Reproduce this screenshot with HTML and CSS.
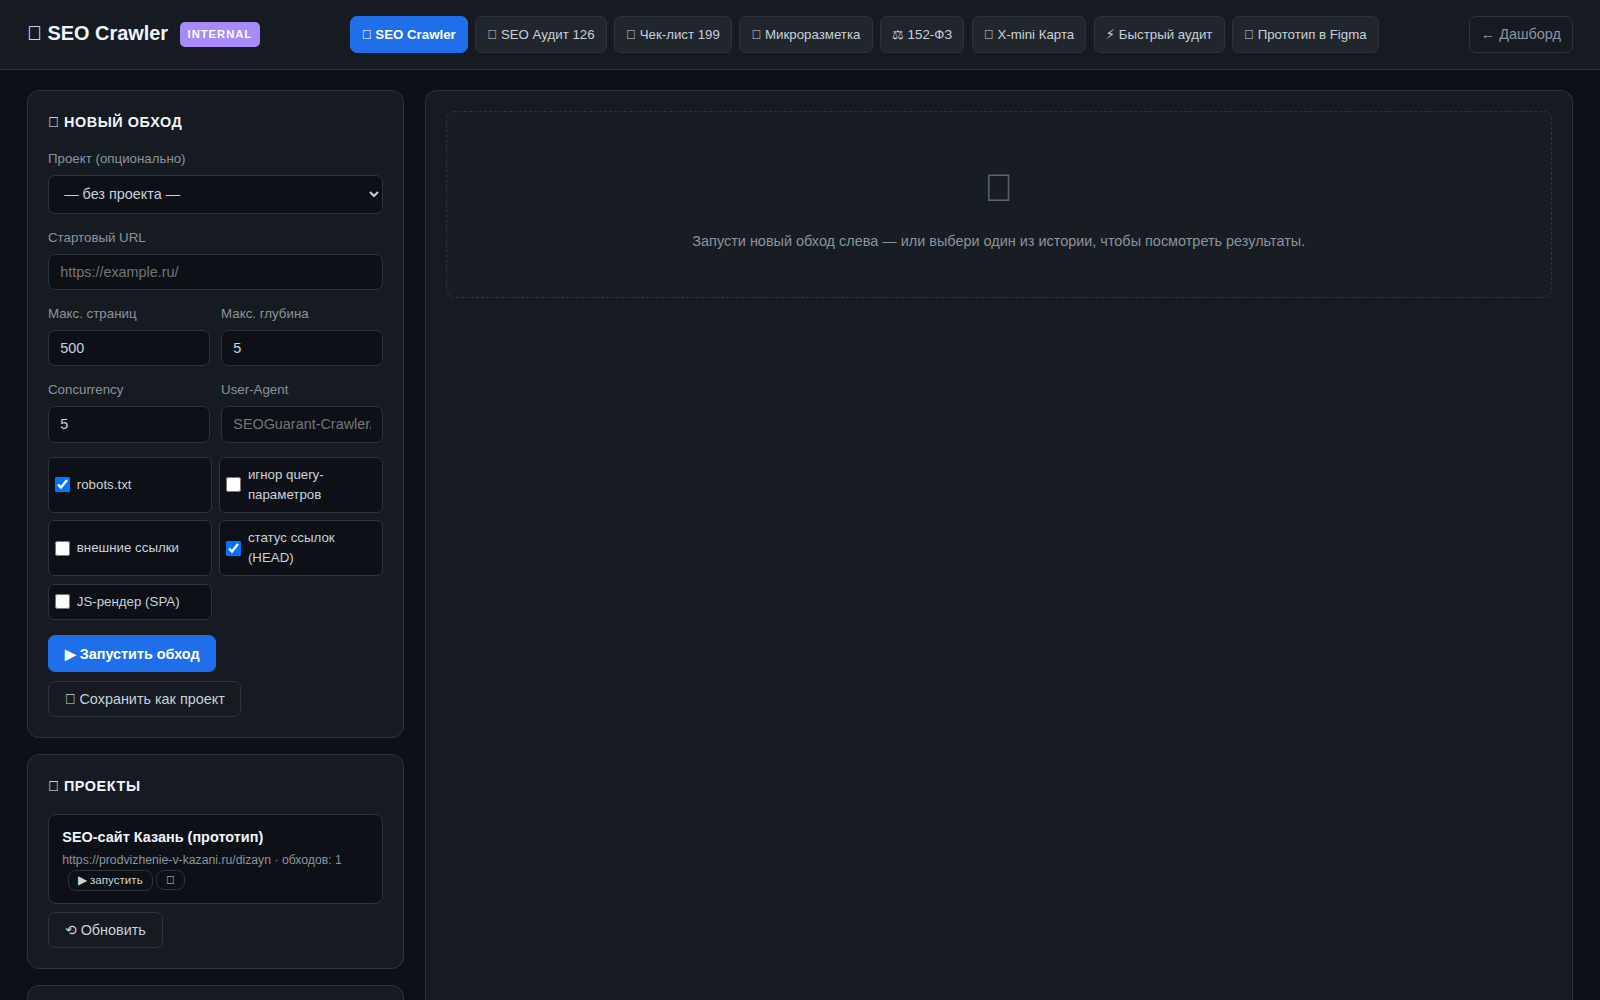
FILE: index.html
```
<!DOCTYPE html>
<html lang="ru">
<head>
    <meta charset="UTF-8">
    <meta name="viewport" content="width=device-width, initial-scale=1.0">
    <title>SEO Crawler</title>
    <link rel="stylesheet" href="styles.css">
</head>
<body>
    <header class="topbar">
        <div class="brand">
            <h1>&#xF0000; SEO Crawler</h1>
            <span class="badge">INTERNAL</span>
        </div>
        <nav class="tools">
            <a class="active" href="#">&#xF0000; SEO Crawler</a>
            <a href="#">&#xF0000; SEO Аудит 126</a>
            <a href="#">&#xF0000; Чек-лист 199</a>
            <a href="#">&#xF0000; Микроразметка</a>
            <a href="#">⚖ 152-ФЗ</a>
            <a href="#">&#xF0000; X-mini Карта</a>
            <a href="#"><span class="bolt">⚡&#xFE0E;</span> Быстрый аудит</a>
            <a href="#">&#xF0000; Прототип в Figma</a>
        </nav>
        <a class="back" href="#">← Дашборд</a>
    </header>

    <main class="layout">
        <aside class="sidebar">
            <section class="card">
                <h2>&#xF0000; Новый обход</h2>
                <form>
                    <div class="field">
                        <label for="project">Проект (опционально)</label>
                        <select id="project">
                            <option>— без проекта —</option>
                        </select>
                    </div>
                    <div class="field">
                        <label for="url">Стартовый URL</label>
                        <input type="url" id="url" placeholder="https://example.ru/">
                    </div>
                    <div class="row">
                        <div class="field">
                            <label for="maxPages">Макс. страниц</label>
                            <input type="number" id="maxPages" value="500">
                        </div>
                        <div class="field">
                            <label for="maxDepth">Макс. глубина</label>
                            <input type="number" id="maxDepth" value="5">
                        </div>
                    </div>
                    <div class="row">
                        <div class="field">
                            <label for="concurrency">Concurrency</label>
                            <input type="number" id="concurrency" value="5">
                        </div>
                        <div class="field">
                            <label for="ua">User-Agent</label>
                            <input type="text" id="ua" placeholder="SEOGuarant-Crawler/1.0">
                        </div>
                    </div>
                    <div class="checks">
                        <label><input type="checkbox" checked> robots.txt</label>
                        <label><input type="checkbox"> игнор query-параметров</label>
                        <label><input type="checkbox"> внешние ссылки</label>
                        <label><input type="checkbox" checked> статус ссылок (HEAD)</label>
                        <label><input type="checkbox"> JS-рендер (SPA)</label>
                    </div>
                    <div class="actions">
                        <button type="button" class="btn btn-primary">▶ Запустить обход</button>
                        <button type="button" class="btn">&#xF0000; Сохранить как проект</button>
                    </div>
                </form>
            </section>

            <section class="card">
                <h2>&#xF0000; Проекты</h2>
                <div class="project">
                    <div class="project-name">SEO-сайт Казань (прототип)</div>
                    <div class="project-meta">
                        https://prodvizhenie-v-kazani.ru/dizayn · обходов: 1
                        <button type="button" class="mini mini-run">▶ запустить</button>
                        <button type="button" class="mini">&#xF0000;</button>
                    </div>
                </div>
                <button type="button" class="btn">⟲ Обновить</button>
            </section>

            <section class="card history"></section>
        </aside>

        <section class="card results">
            <div class="empty">
                <div class="empty-icon">&#xF0000;</div>
                <p>Запусти новый обход слева — или выбери один из истории, чтобы посмотреть результаты.</p>
            </div>
        </section>
    </main>
</body>
</html>
```
FILE: styles.css
```
:root {
    --bg: #0d1117;
    --card: #161b22;
    --card-2: #21262d;
    --border: #2d333b;
    --text: #c9d1d9;
    --muted: #8b949e;
    --white: #f0f6fc;
    --accent: #1f6feb;
}

* {
    box-sizing: border-box;
}

body {
    margin: 0;
    height: 100vh;
    overflow: hidden;
    background: var(--bg);
    color: var(--text);
    font-family: "Liberation Sans", Arial, sans-serif;
    font-size: 16px;
    line-height: 1.5;
}

a {
    color: inherit;
    text-decoration: none;
}

/* header */
.topbar {
    display: flex;
    align-items: center;
    justify-content: space-between;
    height: 70px;
    padding: 0 27px;
    background: var(--card);
    border-bottom: 1px solid var(--border);
}

.brand {
    display: flex;
    align-items: center;
    gap: 12px;
}

.brand h1 {
    margin: 0;
    padding-bottom: 2px;
    font-size: 1.245rem;
    line-height: 1.5;
    color: var(--white);
}

.badge {
    padding: 0.25rem 0.47rem;
    background: #a78bfa;
    color: #fff;
    border-radius: 5px;
    font-size: 0.7rem;
    font-weight: 700;
    letter-spacing: 1px;
}

.tools {
    display: flex;
    gap: 0.45rem;
}

.tools a {
    padding: 0.45rem 0.7rem;
    background: var(--card-2);
    border: 1px solid var(--border);
    border-radius: 7px;
    font-size: 0.83rem;
}

.tools a.active {
    background: var(--accent);
    border-color: var(--accent);
    color: #fff;
    font-weight: 700;
}

.bolt {
    font-family: "DejaVu Sans", sans-serif;
    line-height: 1;
}

.back {
    padding: 0.45rem 0.7rem;
    border: 1px solid var(--border);
    border-radius: 7px;
    color: var(--muted);
    font-size: 0.9rem;
}

/* layout */
.layout {
    display: grid;
    grid-template-columns: 377px 1fr;
    gap: 20.5px;
    height: calc(100vh - 70px);
    padding: 20px 27px 0;
}

.sidebar {
    display: flex;
    flex-direction: column;
    gap: 1rem;
}

.card {
    padding: 20px;
    background: var(--card);
    border: 1px solid var(--border);
    border-radius: 12px;
}

.card h2 {
    margin: 0 0 1rem;
    color: var(--white);
    font-size: 0.9rem;
    line-height: 1.55;
    text-transform: uppercase;
    letter-spacing: 0.04em;
}

.results {
    border-bottom: 0;
    border-radius: 12px 12px 0 0;
}

/* form */
.field {
    margin-bottom: 0.87rem;
}

.field label {
    display: block;
    margin-bottom: 0.37rem;
    color: var(--muted);
    font-size: 0.832rem;
}

.field input,
.field select {
    display: block;
    width: 100%;
    padding: 0.58rem 0.7rem;
    background: var(--bg);
    color: var(--text);
    border: 1px solid var(--border);
    border-radius: 7px;
    font-family: inherit;
    font-size: 0.9rem;
}

.row {
    display: grid;
    grid-template-columns: 1fr 1fr;
    gap: 0.7rem;
}

.row .field {
    min-width: 0;
}

.checks {
    display: grid;
    grid-template-columns: 1fr 1fr;
    gap: 0.45rem;
    margin-bottom: 0.97rem;
}

.checks label {
    display: flex;
    align-items: center;
    gap: 0.4rem;
    padding: 0.45rem 0.4rem;
    background: var(--bg);
    border: 1px solid var(--border);
    border-radius: 6px;
    font-size: 0.832rem;
}

.checks input {
    flex: none;
    width: 15px;
    height: 15px;
    margin: 0;
}

.actions {
    display: flex;
    flex-wrap: wrap;
    gap: 0.55rem;
}

.btn {
    padding: 0.58rem 0.98rem;
    background: transparent;
    color: var(--text);
    border: 1px solid var(--border);
    border-radius: 7px;
    font-family: inherit;
    font-size: 0.9rem;
}

.btn-primary {
    background: var(--accent);
    border-color: var(--accent);
    color: #fff;
    font-weight: 700;
}

/* projects */
.project {
    margin-bottom: 0.5rem;
    padding: 0.76rem 0.83rem 0.73rem;
    background: var(--bg);
    border: 1px solid var(--border);
    border-radius: 8px;
}

.project-name {
    color: var(--white);
    font-size: 0.903rem;
    font-weight: 700;
}

.project-meta {
    margin-top: 0.15rem;
    color: var(--muted);
    font-size: 0.765rem;
    line-height: 1.57;
}

.mini {
    padding: 0.15rem 0.56rem;
    background: transparent;
    color: var(--text);
    border: 1px solid var(--border);
    border-radius: 8px;
    font-family: inherit;
    font-size: 0.725rem;
}

.mini-run {
    margin-left: 0.35rem;
}

.history {
    min-height: 240px;
}

/* results */
.empty {
    padding: 47px 1rem 44px;
    background: #181d23;
    border: 1px dashed var(--border);
    border-radius: 8px;
    color: var(--muted);
    text-align: center;
    font-size: 0.903rem;
}

.empty-icon {
    margin-bottom: 14.5px;
    font-size: 2.4rem;
    opacity: 0.6;
}

.empty p {
    margin: 0;
}
```
